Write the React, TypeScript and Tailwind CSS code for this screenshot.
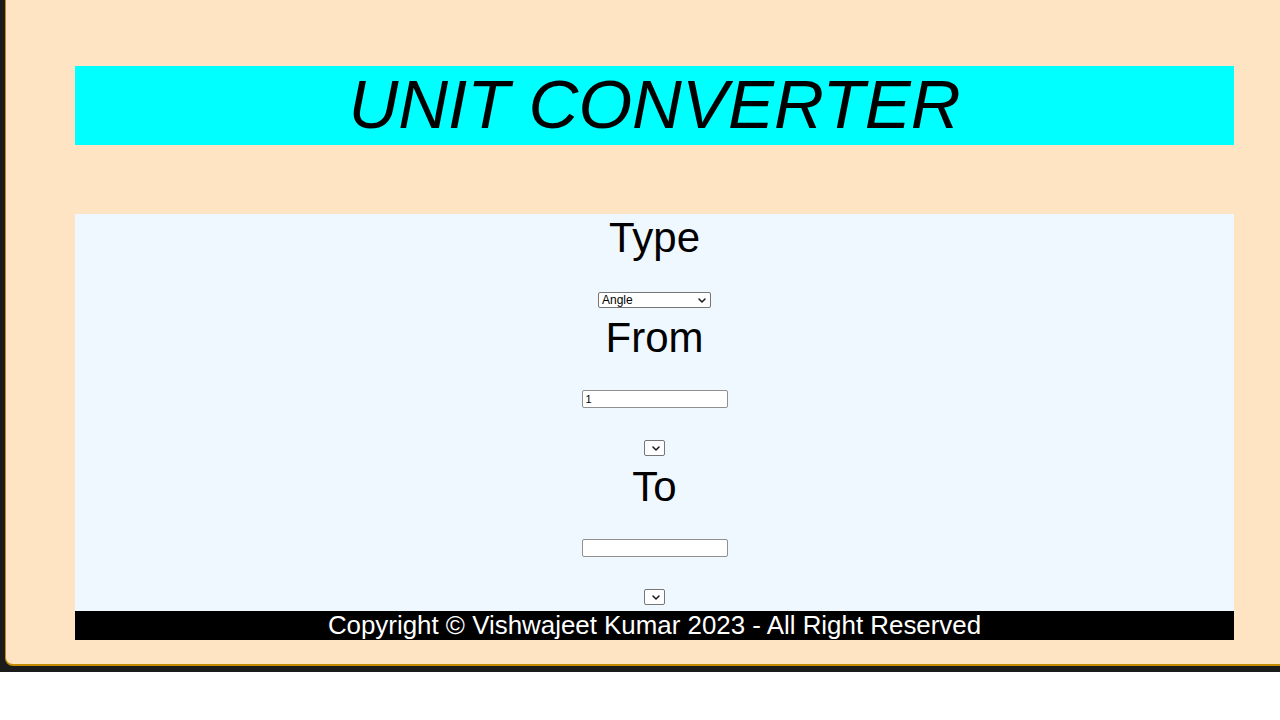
import { useState } from 'react'

const types = ['Angle', 'Area', 'Length', 'Mass', 'Temperature', 'Time', 'Volume']

const Heading = ({ text, className = '' }: { text: string; className?: string }) => (
    <div className={`text-[42px] leading-[42px] text-black ${className}`}>{text}</div>
)

const Chevron = () => (
    <svg
        className="pointer-events-none absolute right-[5px] top-[6px]"
        width="8"
        height="5"
        viewBox="0 0 8 5"
        fill="none"
    >
        <path d="M1 1l3 3 3-3" stroke="#1a1a1a" strokeWidth="1.5" strokeLinecap="round" strokeLinejoin="round" />
    </svg>
)

const NativeSelect = ({
    width,
    value,
    onChange,
    options = [],
    className = '',
}: {
    width: string
    value?: string
    onChange?: (v: string) => void
    options?: string[]
    className?: string
}) => (
    <div className={`relative mx-auto ${width} h-[16px] ${className}`}>
        <select
            value={value}
            onChange={(e) => onChange?.(e.target.value)}
            className="block appearance-none w-full h-full pl-[3px] pr-[14px] text-[12px] leading-[14px] bg-white border border-[#767676] rounded-[2px] text-black outline-none"
        >
            {options.map((o) => (
                <option key={o}>{o}</option>
            ))}
        </select>
        <Chevron />
    </div>
)

const ValueInput = ({ value, onChange, className = '' }: { value: string; onChange?: (v: string) => void; className?: string }) => (
    <input
        type="text"
        value={value}
        onChange={(e) => onChange?.(e.target.value)}
        readOnly={!onChange}
        className={`block mx-auto w-[146px] h-[18px] px-[3px] text-[11px] leading-[16px] text-black bg-white border border-[#8f8f8f] rounded-[2px] outline-none ${className}`}
    />
)

export default function App() {
    const [type, setType] = useState('Angle')
    const [from, setFrom] = useState('1')

    return (
        <div className="w-[1280px] h-[720px] bg-white font-['Liberation_Sans',Arial,sans-serif] overflow-hidden">
            <div className="h-[672px] bg-[#1b1b1b] pl-[5px] pb-[6px]">
                <div className="h-full bg-[#ffe4c4] border-l border-b-2 border-[#c48a00] rounded-bl-[8px] pt-[66px] pl-[69px] pr-[46px]">
                    <header className="h-[79px] bg-[#00ffff] text-center">
                        <h1 className="text-[69px] leading-[77px] italic text-black">UNIT CONVERTER</h1>
                    </header>

                    <main className="mt-[69px] bg-[#f0f8ff] text-center pt-[3px] pb-[6px]">
                        <Heading text="Type" />
                        <NativeSelect width="w-[113px]" value={type} onChange={setType} options={types} className="mt-[33px]" />

                        <Heading text="From" className="mt-[9px]" />
                        <ValueInput value={from} onChange={setFrom} className="mt-[31px]" />
                        <NativeSelect width="w-[21px]" className="mt-[32px]" />

                        <Heading text="To" className="mt-[10px]" />
                        <ValueInput value="" className="mt-[31px]" />
                        <NativeSelect width="w-[21px]" className="mt-[32px]" />
                    </main>

                    <footer className="h-[29px] bg-black text-white text-center text-[25.9px] leading-[29px]">
                        Copyright &copy; Vishwajeet Kumar 2023 - All Right Reserved
                    </footer>
                </div>
            </div>
        </div>
    )
}
